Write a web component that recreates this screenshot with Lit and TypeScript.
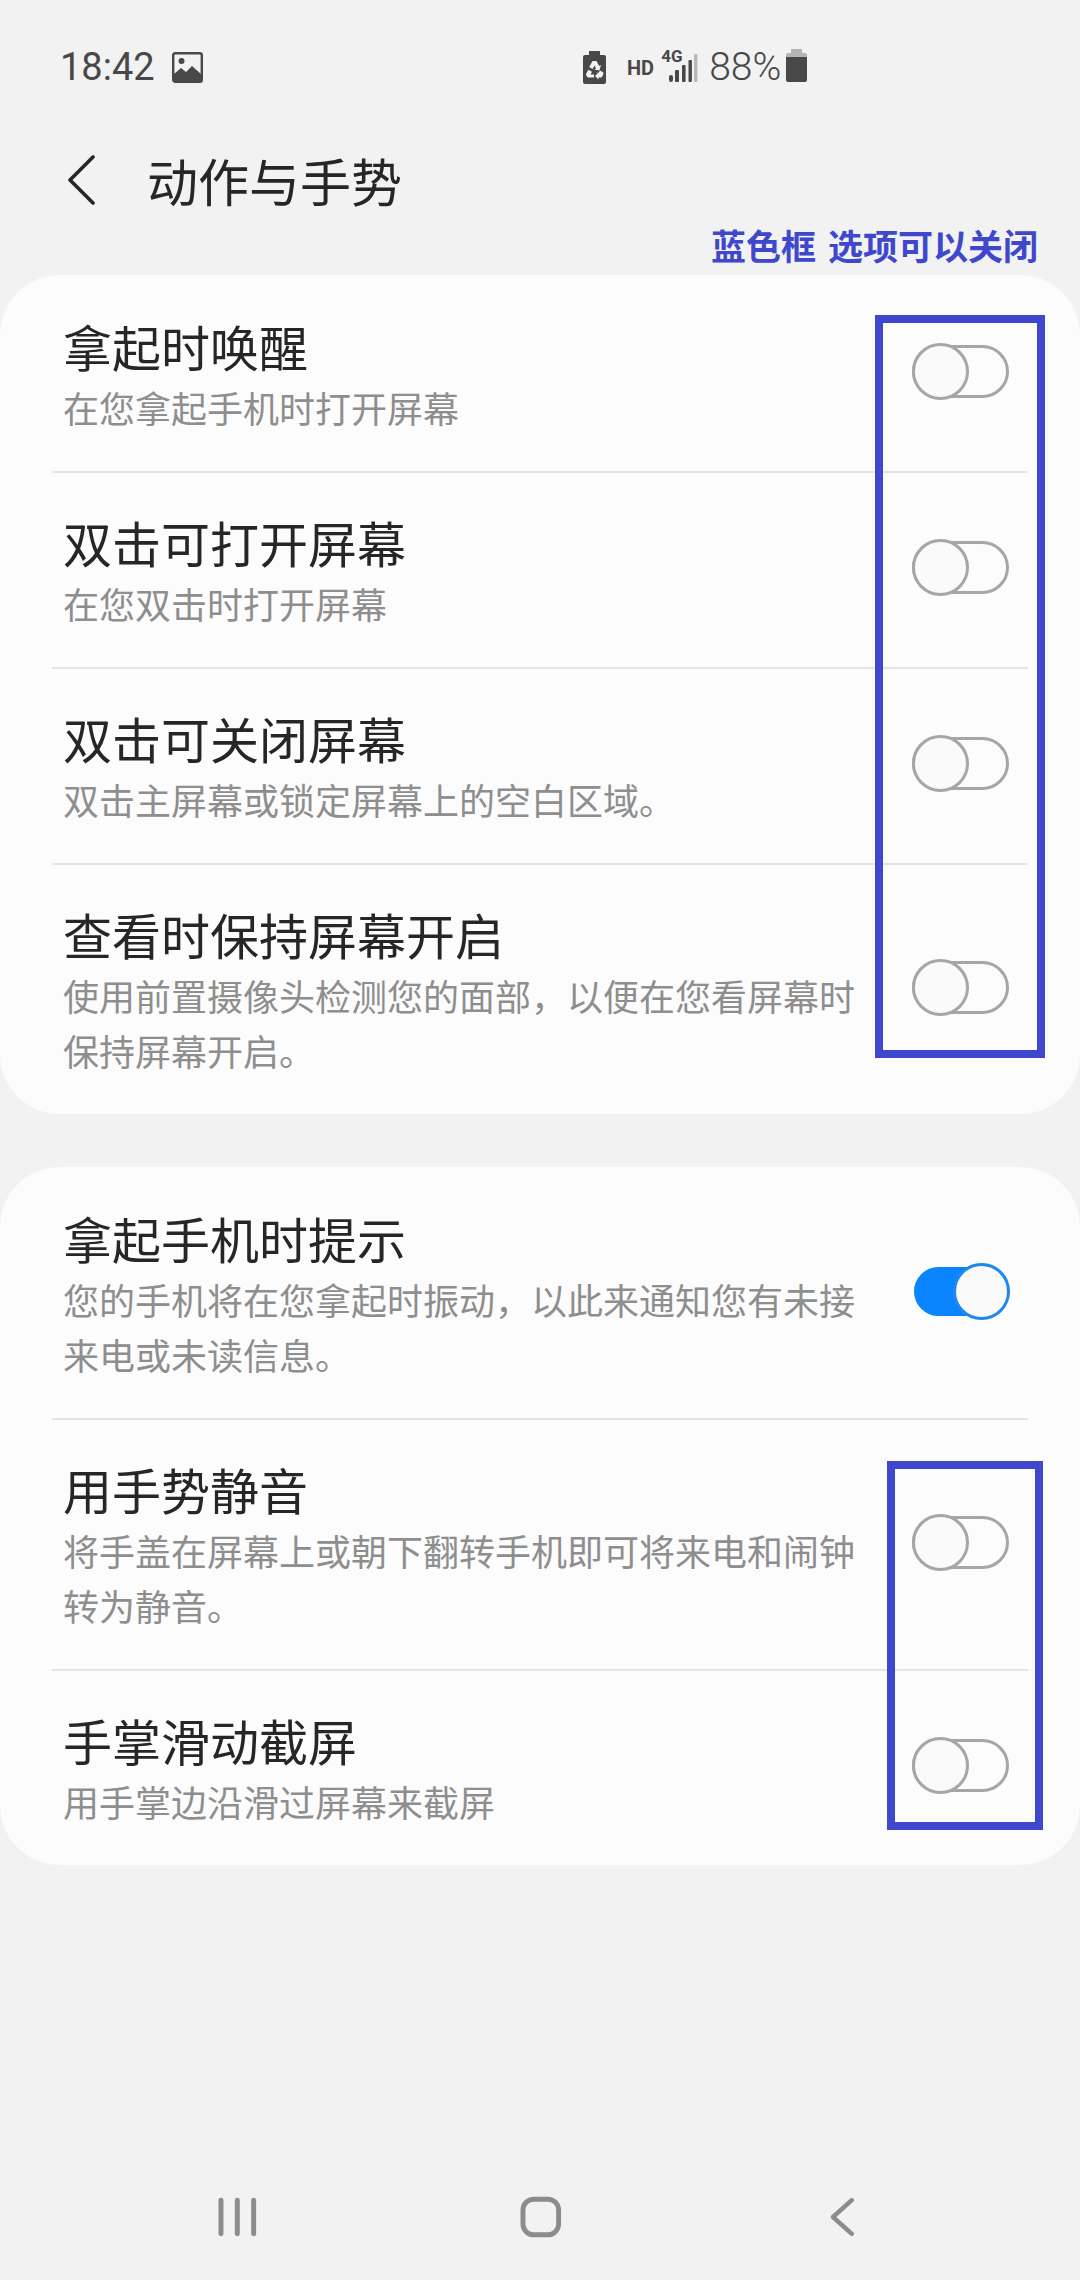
import { LitElement, html, css, svg } from 'lit';
import { customElement } from 'lit/decorators.js';

interface Row {
  title: string;
  sub: string;
  on?: boolean;
}

const GROUPS: Row[][] = [
  [
    { title: '拿起时唤醒', sub: '在您拿起手机时打开屏幕' },
    { title: '双击可打开屏幕', sub: '在您双击时打开屏幕' },
    { title: '双击可关闭屏幕', sub: '双击主屏幕或锁定屏幕上的空白区域。' },
    { title: '查看时保持屏幕开启', sub: '使用前置摄像头检测您的面部，以便在您看屏幕时保持屏幕开启。' },
  ],
  [
    { title: '拿起手机时提示', sub: '您的手机将在您拿起时振动，以此来通知您有未接来电或未读信息。', on: true },
    { title: '用手势静音', sub: '将手盖在屏幕上或朝下翻转手机即可将来电和闹钟转为静音。' },
    { title: '手掌滑动截屏', sub: '用手掌边沿滑过屏幕来截屏' },
  ],
];

const imageIcon = svg`<svg width="31" height="31" viewBox="0 0 31 31">
  <rect x="1.2" y="1.2" width="28.6" height="28.6" rx="2" fill="none" stroke="#484848" stroke-width="2.4"/>
  <circle cx="9.5" cy="9" r="3" fill="#484848"/>
  <path d="M2 22 L9 16 L14 20 L20 14 L29 22 V30 H2 Z" fill="#484848"/>
</svg>`;

const saverIcon = svg`<svg width="23" height="33" viewBox="0 0 23 33">
  <path d="M6 0 H17 V4 H21 Q23 4 23 6 V31 Q23 33 21 33 H2 Q0 33 0 31 V6 Q0 4 2 4 H6 Z" fill="#484848"/>
  <g fill="#f2f2f2">
    <path d="M9.6 10 H13.4 L16.2 15 L18 14 L16.4 19.5 L11.4 18.6 L13 17.4 L11.5 14.6 L9.6 18 L6.2 16 Z"/>
    <path d="M3 23 L5.4 18.8 L9 20.8 L7.6 23.6 H11 V26.6 H5 Q3 26 3 23 Z"/>
    <path d="M12.6 22 H15.5 L17 19.6 L20.4 21.6 Q20.6 25 18.4 26.6 H15.5 V28.4 L12 25 L15.5 21.6 Z"/>
  </g>
</svg>`;

const signalIcon = svg`<svg width="30" height="30" viewBox="0 0 30 30">
  <rect x="0" y="21" width="4" height="7" rx="2" fill="#484848"/>
  <rect x="6" y="16" width="4" height="12" rx="1" fill="#484848"/>
  <rect x="13" y="11" width="3.6" height="17" rx="1" fill="#484848"/>
  <rect x="19.5" y="6" width="3.4" height="22" rx="1" fill="#484848"/>
  <rect x="25" y="0" width="3.4" height="28" rx="1" fill="#b9b9b9"/>
</svg>`;

const batteryIcon = svg`<svg width="21" height="33" viewBox="0 0 21 33">
  <path d="M5 0 H16 V4 H19 Q21 4 21 6 V8 H0 V6 Q0 4 2 4 H5 Z" fill="#b5b5b5"/>
  <path d="M0 8 H21 V31 Q21 33 19 33 H2 Q0 33 0 31 Z" fill="#484848"/>
</svg>`;

@customElement('app-root')
export class AppRoot extends LitElement {
  static styles = css`
    :host {
      display: block;
      font-family: 'Noto Sans CJK SC', 'Noto Sans', sans-serif;
    }

    .page {
      position: relative;
      height: 2280px;
      background: #f2f2f2;
      display: flex;
      flex-direction: column;
      overflow: hidden;
    }

    .status {
      height: 51px;
      margin-top: 42px;
      padding-left: 60px;
      display: flex;
      align-items: center;
      color: #484848;
      font-family: Roboto, sans-serif;
    }

    .status-left {
      width: 523px;
      display: flex;
      align-items: center;
      gap: 17px;
    }

    .status-text {
      font-size: 38px;
      line-height: 51px;
    }

    .pct {
      font-size: 39px;
      font-weight: 300;
      line-height: 51px;
    }

    .status-right {
      display: flex;
      align-items: center;
    }

    .hd {
      margin-left: 21px;
      font-size: 20px;
      font-weight: 700;
      line-height: 24px;
    }

    .signal {
      position: relative;
      width: 30px;
      height: 30px;
      margin-left: 15px;
      margin-right: 10px;
      margin-top: 2px;
    }

    .signal svg {
      display: block;
    }

    .four-g {
      position: absolute;
      left: -8px;
      top: -6px;
      font-size: 17px;
      font-weight: 700;
      line-height: 17px;
    }

    .battery {
      margin-left: 5px;
      display: block;
    }

    .header {
      height: 74px;
      margin-top: 50px;
      padding-left: 68px;
      display: flex;
      align-items: center;
      gap: 52px;
    }

    .header h1 {
      margin: 0;
      font-size: 51px;
      font-weight: 400;
      line-height: 74px;
      color: #262626;
    }

    .note {
      margin-top: 4px;
      height: 54px;
      padding-right: 42px;
      text-align: right;
      font-size: 35px;
      font-weight: 700;
      line-height: 47px;
      word-spacing: 4px;
      color: #3f48cc;
    }

    .card {
      background: #fcfcfc;
      border-radius: 60px;
      margin-bottom: 53px;
    }

    .row {
      display: flex;
      align-items: center;
      gap: 50px;
      padding: 0 71px 0 63px;
      position: relative;
    }

    .row + .row::before {
      content: '';
      position: absolute;
      left: 52px;
      right: 52px;
      top: 0;
      height: 2px;
      background: #e4e4e4;
    }

    .text {
      flex: 1;
      min-width: 0;
      padding: 41px 0 36px;
    }

    .title {
      font-size: 49px;
      line-height: 60px;
      color: #262626;
    }

    .sub {
      margin-top: 4px;
      font-size: 36px;
      line-height: 55px;
      color: #8e8e8e;
    }

    .toggle {
      position: relative;
      flex: none;
      width: 97px;
      height: 53px;
      margin-bottom: 3px;
      box-sizing: border-box;
      border: 3px solid #a6a6a6;
      border-radius: 27px;
    }

    .toggle::after {
      content: '';
      position: absolute;
      left: -3px;
      top: -5px;
      width: 57px;
      height: 57px;
      box-sizing: border-box;
      border: 3px solid #a6a6a6;
      border-radius: 50%;
      background: #fafafa;
    }

    .toggle.on {
      background: #0a84ff;
      border: none;
      height: 49px;
      width: 92px;
      margin-right: 3px;
      margin-left: 2px;
    }

    .toggle.on::after {
      left: auto;
      right: -4px;
      top: -4px;
      border-color: #1e88ee;
    }

    .frame {
      position: absolute;
      box-sizing: border-box;
      border: 8px solid #3f48cc;
    }

    .frame-top {
      left: 875px;
      top: 315px;
      width: 170px;
      height: 743px;
    }

    .frame-bottom {
      left: 887px;
      top: 1461px;
      width: 156px;
      height: 369px;
    }

    .nav {
      margin-top: auto;
      height: 42px;
      margin-bottom: 42px;
      padding: 0 225px 0 218px;
      display: flex;
      align-items: center;
    }

    .nav svg {
      display: block;
    }

    .nav-home {
      margin-left: 263px;
      margin-right: 269px;
    }
  `;

  renderRow(row: Row) {
    return html`
      <div class="row">
        <div class="text">
          <div class="title">${row.title}</div>
          <div class="sub">${row.sub}</div>
        </div>
        <div class="toggle ${row.on ? 'on' : ''}"></div>
      </div>
    `;
  }

  render() {
    return html`
      <div class="page">
        <div class="status">
          <div class="status-left">
            <span class="status-text">18:42</span>
            ${imageIcon}
          </div>
          <div class="status-right">
            ${saverIcon}
            <span class="hd">HD</span>
            <div class="signal"><span class="four-g">4G</span>${signalIcon}</div>
            <span class="pct">88%</span>
            <span class="battery">${batteryIcon}</span>
          </div>
        </div>

        <div class="header">
          <svg width="27" height="50" viewBox="0 0 27 50">
            <path d="M25 2 L2 25 L25 48" fill="none" stroke="#262626" stroke-width="3.6" stroke-linecap="round" stroke-linejoin="round"/>
          </svg>
          <h1>动作与手势</h1>
        </div>

        <div class="note">蓝色框 选项可以关闭</div>

        ${GROUPS.map((rows) => html`<div class="card">${rows.map((r) => this.renderRow(r))}</div>`)}

        <div class="frame frame-top"></div>
        <div class="frame frame-bottom"></div>

        <div class="nav">
          <svg width="39" height="40" viewBox="0 0 39 40">
            <g stroke="#8c8c8c" stroke-width="5" stroke-linecap="round">
              <path d="M3 3 V37"/><path d="M19.5 3 V37"/><path d="M36 3 V37"/>
            </g>
          </svg>
          <svg class="nav-home" width="42" height="42" viewBox="0 0 42 42">
            <rect x="3" y="3" width="36" height="36" rx="11" fill="none" stroke="#8c8c8c" stroke-width="5"/>
          </svg>
          <svg width="25" height="40" viewBox="0 0 25 40">
            <path d="M22 3 L3 20 L22 37" fill="none" stroke="#8c8c8c" stroke-width="4.5" stroke-linecap="round" stroke-linejoin="round"/>
          </svg>
        </div>
      </div>
    `;
  }
}
